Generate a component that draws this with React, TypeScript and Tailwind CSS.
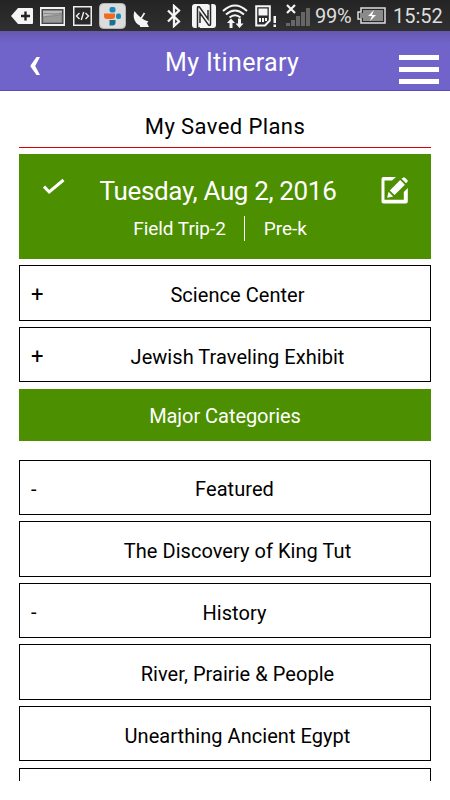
import type { ReactNode } from "react"

interface PlanRowProps {
  label: string
  sign?: "+" | "-"
}

function StatusBar() {
  return (
    <div className="flex h-[31px] shrink-0 items-start bg-gradient-to-b from-[#242424] to-[#303030] text-[#dedede]">
      {/* Back tag */}
      <svg className="ml-[11px] mt-2 h-4 w-[22px] shrink-0" viewBox="0 0 22 16">
        <path d="M0 8 7 0h14q1 0 1 1v14q0 1-1 1H7z" fill="#f5f5f5" />
        <path d="M14.5 3.5v9M10 8h9" stroke="#222" strokeWidth="2.4" />
      </svg>

      {/* Picture */}
      <svg className="ml-[7px] mt-[7px] h-[19px] w-[25px] shrink-0" viewBox="0 0 25 19">
        <rect width="25" height="19" fill="#f2f2f2" />
        <rect x="1.5" y="2" width="22" height="15" fill="#444" />
        <rect x="3" y="3.5" width="19" height="12" fill="#b8b8b8" />
        <path d="M3 7c6-2 8 2 19-1M3 10c7-2 12 0 19-3v8.5H3z" fill="#999" stroke="#777" strokeWidth=".7" />
      </svg>

      {/* Developer */}
      <svg className="ml-2 mt-1.5 h-5 w-[19px] shrink-0" viewBox="0 0 19 20" fill="none">
        <rect width="19" height="20" fill="#eee" />
        <rect x="1.5" y="1.5" width="16" height="17" fill="#292929" />
        <path d="M6.5 7 3.5 10l3 3M12.5 7l3 3-3 3M10.7 6 8.3 14" stroke="#eee" strokeWidth="1.4" />
      </svg>

      {/* Launcher app */}
      <svg className="ml-[7px] mt-[3px] h-[26px] w-[27px] shrink-0" viewBox="0 0 27 26">
        <rect x=".5" y=".5" width="26" height="25" rx="4" fill="#dcdcdc" stroke="#b5b5b5" />
        <rect x="10.5" y="4" width="6" height="5.5" rx="2" fill="#158bc0" />
        <path d="M5 10.5h11v2.5q0 3-3 3H8q-3 0-3-3z" fill="#f16a22" />
        <rect x="17" y="10.5" width="5" height="5.5" rx="2" fill="#158bc0" />
        <path d="M10.5 17h6v2.5q0 3-3 3h-3z" fill="#16718c" />
      </svg>

      {/* Dish */}
      <svg className="ml-[7px] mt-[10px] h-[17px] w-[17px] shrink-0" viewBox="0 0 17 17">
        <path d="M1.5 1C-.5 6 1 13 7 15.5V17h9l-2-4 1.500-1.500C10 10 5 6 1.500 1z" fill="#f5f5f5" />
        <path d="M8 8.5 11.500 3" stroke="#f5f5f5" strokeWidth="1.6" />
      </svg>

      {/* Bluetooth */}
      <svg className="ml-[17px] mt-1 h-6 w-3.5 shrink-0" viewBox="0 0 14 24" fill="none">
        <path d="m1 6.5 11 11-5 4.500V2l5 4.500-11 11" stroke="#f5f5f5" strokeWidth="2.3" />
      </svg>

      {/* NFC */}
      <svg className="ml-[11px] mt-1 h-6 w-6 shrink-0" viewBox="0 0 24 24">
        <rect width="24" height="24" rx="3" fill="#f5f5f5" />
        <path d="M8 24H5.5V4q0-2 2-1L16 15V6M16.500 0h2v20q0 2-2 1L8 9v10" fill="none" stroke="#292929" strokeWidth="1.5" />
      </svg>

      {/* Wifi with transfer arrows */}
      <svg className="ml-[6px] mt-1 h-6 w-[26px] shrink-0" viewBox="0 0 26 24" fill="none">
        <path d="M1 7q12-11 24 0M4 10.5q9-8 18 0M7.500 13.500q5.500-4.500 11 0" stroke="#f5f5f5" strokeWidth="2.1" />
        <path d="m9 14.5 4 4.500h-2.500v5h-3v-5H5zM17.500 24l-4-4.500H16v-5h3v5h2.500z" fill="#f5f5f5" />
      </svg>

      {/* SIM card alert */}
      <svg className="ml-[7px] mt-[5px] h-[22px] w-[22px] shrink-0" viewBox="0 0 22 22" fill="none">
        <path d="M1.2 1.2h13.600v14.300L10 20.500H1.200z" stroke="#f5f5f5" strokeWidth="2" />
        <path d="M3.5 3.5h9v7h-9zM4 13h2v4H4zM7 13h2v4H7zM10 13h2v3h-2zM18.500 11H21v7h-2.500zM18.500 19.500H21V22h-2.500z" fill="#f5f5f5" />
      </svg>

      {/* No signal */}
      <svg className="ml-[9px] mt-1 h-[22px] w-6 shrink-0" viewBox="0 0 24 22">
        <path d="M0 19h4v3H0zM5 16h4v6H5zM10 12h4v10h-4zM15 8h4v14h-4zM20 4h4v18h-4z" fill="#666" />
        <path d="m1 1 8 8M9 1 1 9" stroke="#f5f5f5" strokeWidth="2.2" />
      </svg>

      <span className="ml-[5px] mt-[2px] w-[42px] shrink-0 text-[20px] leading-[28px] tracking-[-0.2px]">99%</span>

      {/* Battery */}
      <svg className="mt-[7px] h-[17px] w-[29px] shrink-0" viewBox="0 0 29 17">
        <path d="M4 1h24v15H4v-4H1V5h3z" fill="#292929" stroke="#ddd" strokeWidth="1.5" />
        <path d="M6 3h20v11H6v-3H3V6h3z" fill="#8a8a8a" />
        <path d="m17 3-6 6h4l-2 5 6-6h-4z" fill="#fff" />
      </svg>

      <span className="ml-[7px] mt-[2px] shrink-0 text-[20px] leading-[28px]">15:52</span>
    </div>
  )
}

function Header() {
  return (
    <header className="flex h-[60px] shrink-0 items-start border-b border-[#594abd] bg-gradient-to-b from-[#6658b0] via-[#7063c9] via-20% to-[#7063c9] text-white">
      <button className="ml-[30px] mt-[26px]" aria-label="Back">
        <svg className="h-[18px] w-[11px]" viewBox="0 0 11 18">
          <path d="M6.5 0H10L5.2 9l4.800 9H6.500L.5 9.600V8.400z" fill="#fff" />
        </svg>
      </button>
      <h1 className="ml-[48px] w-[287px] pl-[76px] pt-4 text-[25px] leading-[32px] tracking-[0.35px] whitespace-nowrap">My Itinerary</h1>
      <button className="ml-[23px] mt-6 flex w-10 shrink-0 flex-col gap-[7px]" aria-label="Menu">
        <span className="h-[5px] w-full bg-white" />
        <span className="h-[5px] w-full bg-white" />
        <span className="h-[5px] w-full bg-white" />
      </button>
    </header>
  )
}

function PlanRow({ label, sign }: PlanRowProps) {
  return (
    <div className="flex h-[55.4px] shrink-0 items-center border border-black text-[20px]">
      <span className={sign === "-" ? "w-[19px] shrink-0 pl-[11px] pt-[3px]" : "w-[25px] shrink-0 pl-[11px] pt-[3px] text-[22px]"}>{sign}</span>
      <span className="flex-1 pt-[4px] text-center tracking-[0.05px]">{label}</span>
    </div>
  )
}

function RowList({ children }: { children: ReactNode }) {
  return <div className="flex flex-col gap-[6.2px]">{children}</div>
}

export default function App() {
  return (
    <div className="flex h-[800px] w-[450px] flex-col overflow-hidden bg-white font-['Roboto',sans-serif] text-black">
      <StatusBar />
      <Header />

      <main className="mx-[19px] h-[690px] overflow-hidden">
        <h2 className="h-14 pt-[21px] text-center text-[22px] leading-[30px] tracking-[0.4px]">My Saved Plans</h2>
        <div className="h-px bg-[#dd0000]" />

        {/* Selected plan */}
        <section className="mt-1.5 flex h-[105px] bg-[#4c8f00] text-white">
          <svg className="ml-6 mt-6 h-[18px] w-[22px] shrink-0" viewBox="0 0 22 18" fill="none">
            <path d="m1 8.5 5.200 5.500L20.500 2" stroke="#fff" strokeWidth="3" />
          </svg>
          <div className="w-[310px] pt-5 text-center">
            <p className="pr-[4px] text-[26px] leading-[34px] tracking-[-0.35px]">Tuesday, Aug 2, 2016</p>
            <div className="mt-[8px] flex items-center justify-center text-[19px] leading-6 tracking-[-0.05px]">
              <span className="border-r border-white pr-[18px] pt-px">Field Trip-2</span>
              <span className="pl-[19px] pt-px">Pre-k</span>
            </div>
          </div>
          <svg className="ml-1.5 mt-[23px] h-[27px] w-[27px] shrink-0" viewBox="0 0 27 27">
            <path d="M15 0 11 3.500H3.500v19.300h19.300V15l4-4v13.500q0 2-2 2H2.500q-2 0-2-2V2q0-2 2-2z" fill="#fff" />
            <path d="m20.500 1.800 4.500 4.500 1.300-1.300q1-1 0-2L24 .7q-1-1-2 0zM19.200 3l4.700 4.700L13.500 18 8.800 13.400zM7.500 14.700l4.700 4.700-6 1.400z" fill="#fff" />
          </svg>
        </section>

        <div className="mt-[6.4px]">
          <RowList>
            <PlanRow sign="+" label="Science Center" />
            <PlanRow sign="+" label="Jewish Traveling Exhibit" />
          </RowList>
        </div>

        <h3 className="mt-[6.4px] h-[52px] bg-[#4c8f00] text-center text-[20px] leading-[54px] tracking-[-0.05px] text-white">Major Categories</h3>

        <div className="mt-[19px]">
          <RowList>
            <PlanRow sign="-" label="Featured" />
            <PlanRow label="The Discovery of King Tut" />
            <PlanRow sign="-" label="History" />
            <PlanRow label="River, Prairie & People" />
            <PlanRow label="Unearthing Ancient Egypt" />
            <PlanRow label="" />
          </RowList>
        </div>
      </main>
    </div>
  )
}
